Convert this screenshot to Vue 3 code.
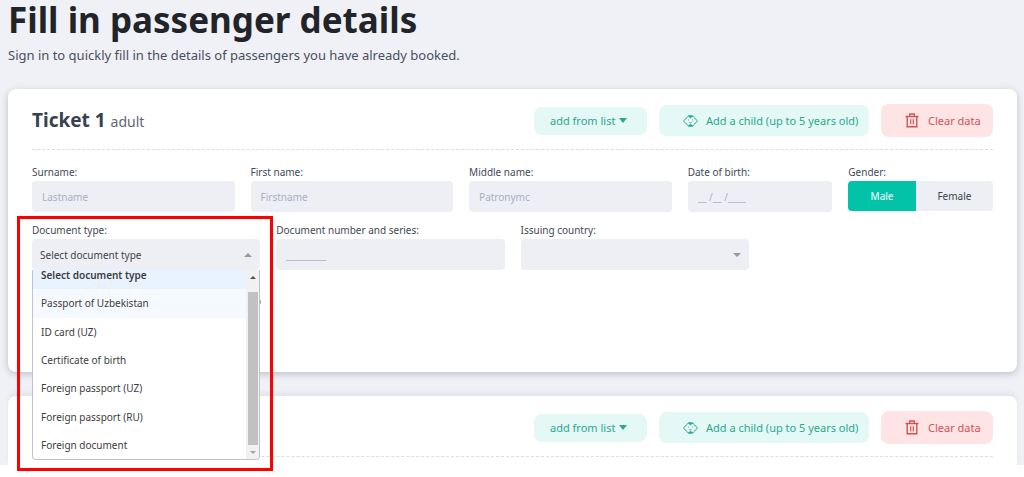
<script setup>
import { ref } from 'vue'

const tickets = [
  { id: 1, kind: 'adult', open: true },
  { id: 2, kind: 'adult', open: false },
]
const names = [
  { id: 'surname', label: 'Surname:', hint: 'Lastname' },
  { id: 'first', label: 'First name:', hint: 'Firstname' },
  { id: 'middle', label: 'Middle name:', hint: 'Patronymc' },
  { id: 'birth', label: 'Date of birth:', hint: '__ /__ /____' },
]
const documents = [
  'Select document type',
  'Passport of Uzbekistan',
  'ID card (UZ)',
  'Certificate of birth',
  'Foreign passport (UZ)',
  'Foreign passport (RU)',
  'Foreign document',
]
const selected = ref(documents[0])
const hovered = ref(documents[1])
const gender = ref('Male')
</script>

<template>
  <div class="shell">
    <main class="page">
      <h1>Fill in passenger details</h1>
      <p class="lead">Sign in to quickly fill in the details of passengers you have already booked.</p>

      <section v-for="t in tickets" :key="t.id" class="card" :class="{ open: t.open }">
        <header class="head">
          <h2 v-if="t.open">Ticket {{ t.id }} <small>{{ t.kind }}</small></h2>
          <div class="actions">
            <button type="button" class="btn list">
              add from list
              <svg width="8" height="5" viewBox="0 0 8 5"><path d="M0 0h8L4 5z" fill="currentColor" /></svg>
            </button>
            <button type="button" class="btn child">
              <svg width="15" height="12" viewBox="0 0 15 12" fill="none" stroke="currentColor">
                <path d="M2.800 4C3.600 1.900 5.300.7 7.500.7s3.900 1.200 4.700 3.300c1 .2 1.900 1 1.900 2s-.9 1.800-1.900 2c-.8 2.100-2.500 3.300-4.700 3.300S3.600 10.100 2.800 8C1.800 7.800.9 7 .9 6s.9-1.800 1.900-2z" />
                <path d="M5.500 1.200h4L7.500 2.800zM5.600 10.800h3.800L7.500 9.200z" fill="currentColor" />
                <path d="M5.500 4.500v1M9.500 4.500v1M6.200 7.300c.7.600 1.900.6 2.600 0" stroke-width=".8" />
              </svg>
              Add a child (up to 5 years old)
            </button>
            <button type="button" class="btn clear">
              <svg width="14" height="15" viewBox="0 0 14 15" fill="none" stroke="currentColor">
                <path d="M.5 3.500h13M2.200 3.500v10.300h9.600V3.500" stroke-width="1.400" />
                <path d="M4.700 3.200V1h4.600v2.200" stroke-width="1.300" />
                <path d="M5.700 6.200v5M8.300 6.200v5" stroke-width="1.200" />
              </svg>
              Clear data
            </button>
          </div>
        </header>

        <form v-if="t.open" class="form" @submit.prevent>
          <div class="row people">
            <div v-for="f in names" :key="f.id" class="field">
              <label :for="f.id">{{ f.label }}</label>
              <input :id="f.id" type="text" class="box" :placeholder="f.hint" />
            </div>
            <div class="field">
              <span id="gender" class="label">Gender:</span>
              <div class="toggle" role="group" aria-labelledby="gender">
                <button
                  v-for="g in ['Male', 'Female']"
                  :key="g"
                  type="button"
                  :class="{ on: gender === g }"
                  :aria-pressed="gender === g"
                  @click="gender = g"
                >{{ g }}</button>
              </div>
            </div>
          </div>

          <div class="row papers">
            <div class="field type">
              <label for="doctype">Document type:</label>
              <div class="pick">
                <select id="doctype" v-model="selected" class="box chosen">
                  <option v-for="d in documents" :key="d">{{ d }}</option>
                </select>
                <i class="arrow up"></i>
                <div class="menu">
                  <ul role="listbox" aria-label="Document type">
                    <li
                      v-for="d in documents"
                      :key="d"
                      role="option"
                      :aria-selected="d === selected"
                      :class="{ current: d === selected, hover: d === hovered }"
                      @mouseenter="hovered = d"
                      @click="selected = d"
                    >{{ d }}</li>
                  </ul>
                  <div class="bar"><i class="tip top"></i><i class="thumb"></i><i class="tip bottom"></i></div>
                </div>
              </div>
              <div class="hint"><i></i></div>
              <div class="frame"></div>
            </div>
            <div class="field">
              <label for="docnum">Document number and series:</label>
              <input id="docnum" type="text" class="box" placeholder="_________" />
            </div>
            <div class="field">
              <label for="country">Issuing country:</label>
              <div class="pick">
                <select id="country" class="box"><option></option></select>
                <i class="arrow"></i>
              </div>
            </div>
          </div>
        </form>
      </section>
    </main>
  </div>
</template>

<style>
body {
  background: #fff;
}
</style>

<style scoped>
* {
  box-sizing: border-box;
}
.shell {
  padding-bottom: 12px;
}
.page {
  padding: 0 7px 0 8px;
  background: #f0f1f6;
  font-family: "Noto Sans", "Open Sans", sans-serif;
  font-size: 10px;
  color: #3f4957;
}
h1 {
  margin: 0;
  font-size: 35px;
  line-height: 40px;
  font-weight: 700;
  color: #212529;
}
.lead {
  margin: 0 0 24px;
  padding-top: 6px;
  font-size: 13px;
  line-height: 19px;
  color: #484f60;
}
.card {
  padding: 15px 24px 8px;
  border-radius: 8px 8px 0 0;
  background: #fff;
  box-shadow: 0 -4px 4px rgba(60, 64, 90, 0.06);
}
.card.open {
  position: relative;
  z-index: 1;
  margin-bottom: 24px;
  padding-bottom: 56px;
  border-radius: 8px;
  box-shadow: 0 2px 7px rgba(40, 44, 60, 0.25);
}
.head {
  display: flex;
  align-items: center;
  padding-bottom: 12px;
  border-bottom: 1px dashed #dcdce8;
}
h2 {
  margin: 0;
  font-size: 19px;
  line-height: 28px;
  font-weight: 700;
  color: #364152;
}
h2 small {
  font-size: 14px;
  font-weight: 400;
  color: #5d6674;
}
.actions {
  display: flex;
  align-items: center;
  gap: 12px;
  margin-left: auto;
}
button,
input,
select {
  margin: 0;
  border: 0;
  font: inherit;
}
.btn {
  display: flex;
  align-items: center;
  border-radius: 8px;
  font-size: 11px;
  white-space: nowrap;
  color: #2ba790;
  background: #e4f8f5;
}
.list {
  width: 113px;
  height: 28px;
  padding: 0 16px;
  gap: 4px;
}
.child {
  width: 210px;
  height: 31px;
  padding: 0 0 0 24px;
  gap: 8px;
}
.clear {
  width: 112px;
  height: 33px;
  padding: 0 0 0 24px;
  gap: 9px;
  color: #d05356;
  background: #fee4e4;
}
.form {
  padding-top: 14px;
}
.row {
  display: grid;
  gap: 16px;
}
.people {
  grid-template-columns: 7fr 7fr 7fr 5fr 5fr;
  margin-bottom: 10px;
}
.papers {
  grid-template-columns: repeat(4, 1fr);
}
.field {
  min-width: 0;
}
label,
.label {
  display: block;
  line-height: 17px;
  white-space: nowrap;
}
.box {
  display: block;
  width: 100%;
  height: 31px;
  padding: 0 10px;
  border-radius: 4px;
  background: #eeeff5;
  color: #48525f;
  appearance: none;
}
.box::placeholder {
  color: #a9aec2;
  opacity: 1;
}
.toggle {
  display: flex;
  height: 30px;
  overflow: hidden;
  border-radius: 4px;
}
.toggle button {
  flex: 8;
  padding: 0;
  background: #eeeff5;
  color: #3c434c;
}
.toggle .on {
  flex: 7;
  background: #02c3a7;
  color: #fff;
}
.type,
.pick {
  position: relative;
}
.chosen {
  padding: 0 8px;
  color: #444;
}
.arrow {
  position: absolute;
  right: 8px;
  top: 14px;
  border: 4px solid transparent;
  border-top-color: #999;
  border-bottom-width: 0;
}
.arrow.up {
  border-top-width: 0;
  border-bottom: 4px solid #999;
}
.menu {
  position: absolute;
  z-index: 2;
  top: 31px;
  left: 0;
  right: 0;
  display: flex;
  align-items: flex-end;
  height: 190px;
  overflow: hidden;
  border: 1px solid #c4c4c8;
  border-top: 0;
  border-radius: 0 0 4px 4px;
  background: #fff;
}
ul {
  display: flex;
  flex: 1;
  flex-direction: column;
  height: 198px;
  margin: 0;
  padding: 0;
  list-style: none;
}
li {
  display: flex;
  flex: 1;
  align-items: center;
  padding-left: 8px;
  color: #3c3c3c;
}
li.hover {
  background: #f4faff;
}
li.current {
  background: #e8f3ff;
  font-weight: 600;
}
.bar {
  display: flex;
  flex-direction: column;
  align-items: center;
  justify-content: space-between;
  width: 13px;
  height: 189px;
  padding: 6px 1px 5px;
  background: #f1f1f1;
}
.tip {
  border: 3px solid transparent;
}
.top {
  border-top: 0;
  border-bottom-color: #505050;
}
.bottom {
  border-bottom: 0;
  border-top-color: #a3a3a3;
}
.thumb {
  flex: 1;
  width: 10px;
  margin: 13px 0 6px;
  background: #c1c1c1;
}
.hint {
  display: flex;
  justify-content: flex-end;
  padding: 29px 0 11px;
}
.hint i {
  width: 6px;
  height: 6px;
  margin-right: -1px;
  border-radius: 50%;
  background: #7fa4cf;
}
.frame {
  position: absolute;
  z-index: 3;
  top: -6px;
  left: -15px;
  right: -13px;
  height: 255px;
  border: 3px solid #fe0000;
  pointer-events: none;
}
</style>
